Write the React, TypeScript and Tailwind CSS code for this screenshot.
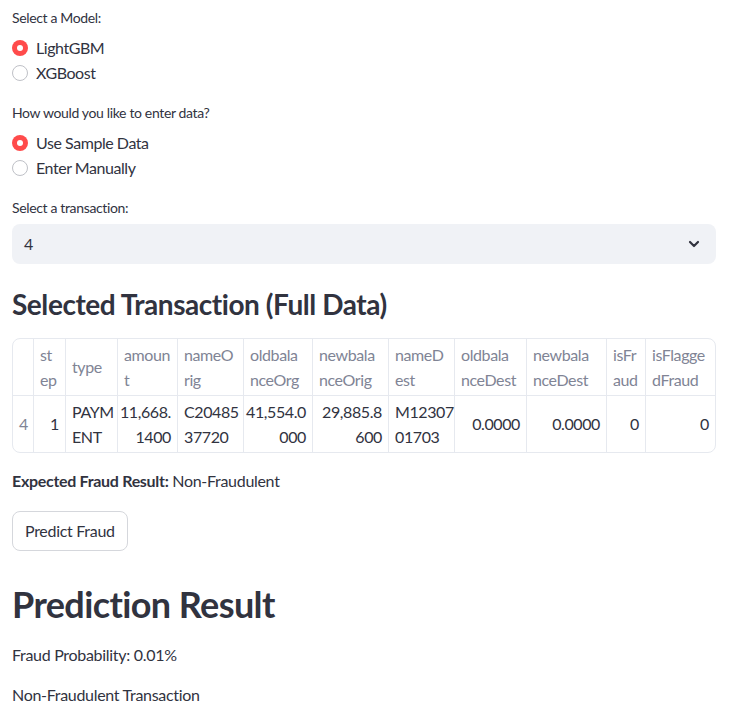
import React from "react";

const FONT = { fontFamily: "Lato, 'Source Sans Pro', 'Noto Sans', sans-serif" };

function Radio({ label, checked }: { label: string; checked?: boolean }) {
  return (
    <div className="flex h-[25px] items-center">
      {checked ? (
        <span className="flex h-4 w-4 items-center justify-center rounded-full bg-[#ff4b4b]">
          <span className="h-[6px] w-[6px] rounded-full bg-white" />
        </span>
      ) : (
        <span className="h-4 w-4 rounded-full border border-[#bfc1c7] bg-white" />
      )}
      <span className="ml-2 text-[16px] tracking-[-0.45px] text-[#31333f]">{label}</span>
    </div>
  );
}

const cols = [
  { h: [""], v: ["4"], align: "left", gray: true },
  { h: ["st", "ep"], v: ["1"], align: "right" },
  { h: ["type"], v: ["PAYM", "ENT"], align: "left" },
  { h: ["amoun", "t"], v: ["11,668.", "1400"], align: "right" },
  { h: ["nameO", "rig"], v: ["C20485", "37720"], align: "left" },
  { h: ["oldbala", "nceOrg"], v: ["41,554.0", "000"], align: "right" },
  { h: ["newbala", "nceOrig"], v: ["29,885.8", "600"], align: "right" },
  { h: ["nameD", "est"], v: ["M12307", "01703"], align: "left" },
  { h: ["oldbala", "nceDest"], v: ["0.0000"], align: "right" },
  { h: ["newbala", "nceDest"], v: ["0.0000"], align: "right" },
  { h: ["isFr", "aud"], v: ["0"], align: "right" },
  { h: ["isFlagge", "dFraud"], v: ["0"], align: "right" },
];

export default function App() {
  return (
    <div className="min-h-[721px] w-[739px] bg-white text-[#31333f] tracking-[-0.3px]" style={FONT}>
      <div className="flex w-[716px] flex-col pl-3 pt-[7px]">
        <div className="h-[21px] text-[14px] leading-[21px] tracking-[-0.35px]">Select a Model:</div>
        <div className="mt-[7px] flex flex-col">
          <Radio label="LightGBM" checked />
          <Radio label="XGBoost" />
        </div>
        <div className="mt-[17px] h-[21px] text-[14px] leading-[21px] tracking-[-0.35px]">How would you like to enter data?</div>
        <div className="mt-[7px] flex flex-col">
          <Radio label="Use Sample Data" checked />
          <Radio label="Enter Manually" />
        </div>
        <div className="mt-[17px] h-[21px] text-[14px] leading-[21px] tracking-[-0.35px]">Select a transaction:</div>
        <div className="mt-[6px] flex h-10 items-center justify-between rounded-lg bg-[#f0f2f6] pl-3 pr-4">
          <span className="text-[16px]">4</span>
          <svg width="12" height="8" viewBox="0 0 12 8" fill="none">
            <path d="M2 2l4 4 4-4" stroke="#31333f" strokeWidth="2.2" strokeLinecap="round" strokeLinejoin="round" />
          </svg>
        </div>
        <h2 className="mt-[24px] text-[28px] font-bold leading-[1.2] tracking-[-0.45px]">Selected Transaction (Full Data)</h2>
        <div className="mt-[16px] overflow-hidden rounded-lg border border-[#e6e9ef]">
          <div className="grid grid-cols-[21px_32px_52px_60px_66px_69px_76px_66px_72px_80px_39px_69px] text-[16px] leading-[25px] tracking-[-0.4px]">
            {cols.map((c, i) => (
              <div
                key={"h" + i}
                className={`flex h-[57px] items-center border-b border-[#e6e9ef] px-[6px] text-[#808495] whitespace-nowrap ${
                  i < cols.length - 1 ? "border-r" : ""
                }`}
              >
                <div>
                  {c.h.map((l, j) => (
                    <div key={j}>{l}</div>
                  ))}
                </div>
              </div>
            ))}
            {cols.map((c, i) => (
              <div
                key={"d" + i}
                className={`flex h-[56px] items-center px-[6px] whitespace-nowrap ${
                  i < cols.length - 1 ? "border-r border-[#e6e9ef]" : ""
                } ${c.align === "right" ? "justify-end text-right" : "justify-start text-left"} ${
                  c.gray ? "text-[#808495]" : "text-[#31333f]"
                }`}
              >
                <div>
                  {c.v.map((l, j) => (
                    <div key={j}>{l}</div>
                  ))}
                </div>
              </div>
            ))}
          </div>
        </div>
        <p className="mt-[15px] h-[26px] text-[16px] leading-[26px]">
          <span className="font-bold">Expected Fraud Result:</span> Non-Fraudulent
        </p>
        <div className="mt-[17px]">
          <button className="h-10 rounded-lg border border-[#d5d7dc] bg-white px-3 text-[16px] text-[#31333f]">
            Predict Fraud
          </button>
        </div>
        <h1 className="mt-[32px] text-[36px] font-bold leading-[1.2] tracking-[-0.6px]">Prediction Result</h1>
        <p className="mt-[16px] h-[26px] text-[16px] leading-[26px]">Fraud Probability: 0.01%</p>
        <p className="mt-[14px] h-[26px] text-[16px] leading-[26px]">Non-Fraudulent Transaction</p>
      </div>
    </div>
  );
}
